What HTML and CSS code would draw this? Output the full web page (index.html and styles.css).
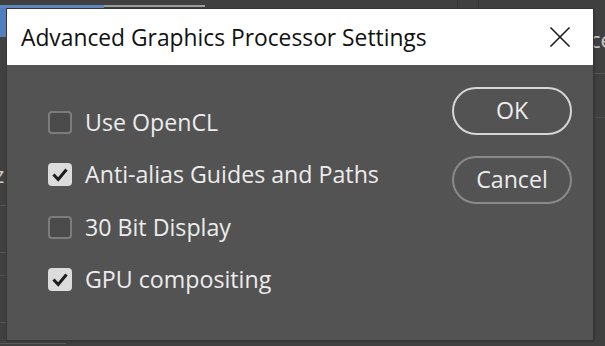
FILE: index.html
```html
<!DOCTYPE html>
<html lang="en">
<head>
    <meta charset="UTF-8">
    <meta name="viewport" content="width=device-width, initial-scale=1.0">
    <title>Advanced Graphics Processor Settings</title>
    <link rel="stylesheet" href="styles.css">
</head>
<body>
    <!-- bits of the app window peeking out behind the dialog -->
    <div class="backdrop">
        <div class="bd-tab-blue"></div>
        <div class="bd-tab-gray"></div>
        <div class="bd-tab-side"></div>
        <div class="bd-vline bd-vline-a"></div>
        <div class="bd-vline bd-vline-b"></div>
        <span class="bd-text bd-text-right">ce</span>
        <span class="bd-text bd-text-left">z</span>
        <div class="bd-hline bd-right-1"></div>
        <div class="bd-hline bd-right-2"></div>
        <div class="bd-hline bd-left-1"></div>
        <div class="bd-hline bd-left-2"></div>
        <div class="bd-hline bd-left-3"></div>
        <div class="bd-hline bd-left-4"></div>
        <div class="bd-hline bd-bottom"></div>
    </div>

    <div class="dialog">
        <div class="title-bar">
            <span class="title">Advanced Graphics Processor Settings</span>
            <button class="close-button" aria-label="Close">
                <svg width="22" height="22" viewBox="0 0 22 22">
                    <path d="M1.5 1.5 L20.5 20.5 M20.5 1.5 L1.5 20.5" stroke="#1b1b1b" stroke-width="1.6" fill="none"/>
                </svg>
            </button>
        </div>
        <div class="dialog-body">
            <div class="options">
                <label class="option">
                    <span class="checkbox"></span>
                    <span class="option-label">Use OpenCL</span>
                </label>
                <label class="option">
                    <span class="checkbox checked">
                        <svg width="24" height="23" viewBox="0 0 24 23">
                            <path d="M5.5 11.5 L10.2 16.5 L18.5 6.5" stroke="#1e1e1e" stroke-width="3" fill="none"/>
                        </svg>
                    </span>
                    <span class="option-label">Anti-alias Guides and Paths</span>
                </label>
                <label class="option">
                    <span class="checkbox"></span>
                    <span class="option-label">30 Bit Display</span>
                </label>
                <label class="option">
                    <span class="checkbox checked">
                        <svg width="24" height="23" viewBox="0 0 24 23">
                            <path d="M5.5 11.5 L10.2 16.5 L18.5 6.5" stroke="#1e1e1e" stroke-width="3" fill="none"/>
                        </svg>
                    </span>
                    <span class="option-label">GPU compositing</span>
                </label>
            </div>
            <div class="actions">
                <button class="pill-button primary">OK</button>
                <button class="pill-button">Cancel</button>
            </div>
        </div>
    </div>
</body>
</html>
```

FILE: styles.css
```css
body {
    margin: 0;
    width: 605px;
    height: 346px;
    overflow: hidden;
    position: relative;
    background-color: #404040;
    font-family: "Open Sans", "Noto Sans", sans-serif;
}

/* backdrop fragments */
.backdrop div,
.backdrop span {
    position: absolute;
}
.bd-tab-blue {
    left: 0;
    top: 5px;
    width: 104px;
    height: 3px;
    background-color: #5d86bd;
}
.bd-tab-gray {
    left: 104px;
    top: 5px;
    width: 101px;
    height: 2px;
    background-color: #9c9c9c;
}
.bd-tab-side {
    left: 0;
    top: 8px;
    width: 7px;
    height: 29px;
    background-color: #4f7fbf;
}
.bd-vline {
    top: 0;
    width: 1px;
    height: 9px;
    background-color: #333;
}
.bd-vline-a { left: 457px; }
.bd-vline-b { left: 478px; }
.bd-text {
    color: #c9c9c9;
    font-size: 22px;
    line-height: 1;
}
.bd-text-right {
    left: 590px;
    top: 28px;
}
.bd-text-left {
    left: -6px;
    top: 163px;
}
.bd-hline {
    height: 1px;
    background-color: #555;
}
.bd-right-1 { left: 594px; width: 11px; top: 73px; }
.bd-right-2 { left: 594px; width: 11px; top: 117px; background-color: #4b4b4b; }
.bd-left-1 { left: 0; width: 7px; top: 205px; }
.bd-left-2 { left: 0; width: 7px; top: 252px; }
.bd-left-3 { left: 0; width: 7px; top: 275px; background-color: #4b4b4b; }
.bd-left-4 { left: 0; width: 7px; top: 322px; }
.bd-bottom { left: 0; width: 66px; top: 343px; background-color: #5a5a5a; }

/* dialog */
.dialog {
    position: relative;
    margin: 9px 0 0 7px;
    width: 586px;
    height: 331px;
    background-color: #535353;
    box-shadow: 0 0 0 1px #363636, 1px 1px 2px rgba(0, 0, 0, 0.4);
}
.title-bar {
    height: 56px;
    background-color: #ffffff;
    display: flex;
    align-items: center;
    justify-content: space-between;
    padding: 0 22px 0 14px;
}
.title {
    font-size: 22.8px;
    color: #111;
}
.close-button {
    border: none;
    background: none;
    padding: 0;
    width: 22px;
    height: 22px;
    display: flex;
    cursor: pointer;
}
.dialog-body {
    display: flex;
    justify-content: space-between;
    padding: 22px 21px 0 41px;
}
.options {
    display: flex;
    flex-direction: column;
    padding-top: 9px;
}
.option {
    display: flex;
    align-items: center;
    gap: 13px;
    height: 52.5px;
}
.checkbox {
    box-sizing: border-box;
    width: 24px;
    height: 23px;
    border: 2px solid #7c7c7c;
    border-radius: 4px;
    background-color: #4b4b4b;
    display: flex;
}
.checkbox svg {
    margin: -2px;
}
.checkbox.checked {
    background-color: #dcdcdc;
    border-color: #dcdcdc;
}
.option-label {
    font-size: 23.2px;
    color: #ececec;
    padding-bottom: 1px;
}
.actions {
    display: flex;
    flex-direction: column;
    gap: 21px;
}
.pill-button {
    box-sizing: border-box;
    width: 120px;
    height: 48px;
    border: 2px solid #8a8a8a;
    border-radius: 24px;
    background: none;
    color: #ececec;
    font-family: inherit;
    font-size: 23.2px;
    padding: 0 0 2px;
    cursor: pointer;
}
.pill-button.primary {
    border-color: #d6d6d6;
}
```
